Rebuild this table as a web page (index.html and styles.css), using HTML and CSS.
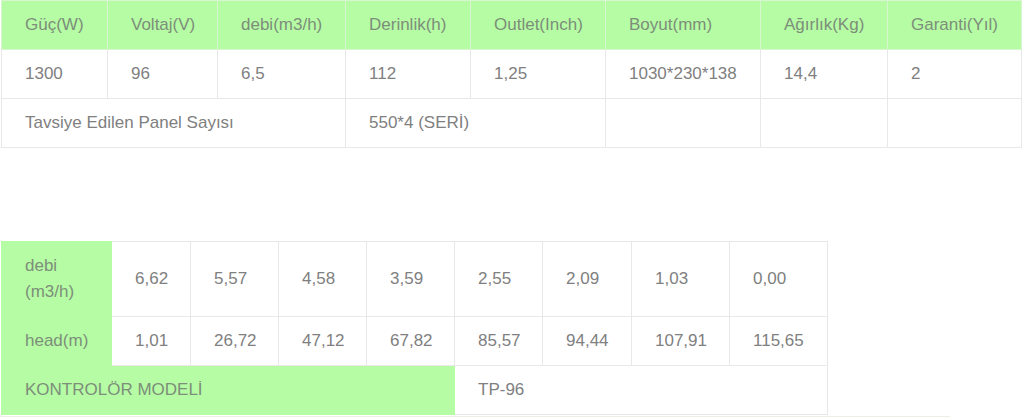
FILE: index.html
```html
<!DOCTYPE html>
<html>
  <head>
    <meta charset="UTF-8" />
    <title>Pompa Teknik Özellikler</title>
    <link rel="stylesheet" href="styles.css">
  </head>
  <body>
    <div class="product-specs">
      <!-- Teknik özellikler -->
      <table class="spec-table">
        <colgroup>
          <col style="width: 106px" />
          <col style="width: 110px" />
          <col style="width: 128px" />
          <col style="width: 125px" />
          <col style="width: 135px" />
          <col style="width: 155px" />
          <col style="width: 127px" />
          <col style="width: 134px" />
        </colgroup>
        <tr class="head-row">
          <td>Güç(W)</td>
          <td>Voltaj(V)</td>
          <td>debi(m3/h)</td>
          <td>Derinlik(h)</td>
          <td>Outlet(Inch)</td>
          <td>Boyut(mm)</td>
          <td>Ağırlık(Kg)</td>
          <td>Garanti(Yıl)</td>
        </tr>
        <tr>
          <td>1300</td>
          <td>96</td>
          <td>6,5</td>
          <td>112</td>
          <td>1,25</td>
          <td>1030*230*138</td>
          <td>14,4</td>
          <td>2</td>
        </tr>
        <tr>
          <td colspan="3">Tavsiye Edilen Panel Sayısı</td>
          <td colspan="2">550*4 (SERİ)</td>
          <td></td>
          <td></td>
          <td></td>
        </tr>
      </table>

      <!-- Performans eğrisi -->
      <table class="curve-table">
        <colgroup>
          <col style="width: 110px" />
          <col style="width: 79px" />
          <col style="width: 88px" />
          <col style="width: 88px" />
          <col style="width: 88px" />
          <col style="width: 88px" />
          <col style="width: 89px" />
          <col style="width: 98px" />
          <col style="width: 98px" />
        </colgroup>
        <tr>
          <td class="label">debi (m3/h)</td>
          <td>6,62</td>
          <td>5,57</td>
          <td>4,58</td>
          <td>3,59</td>
          <td>2,55</td>
          <td>2,09</td>
          <td>1,03</td>
          <td>0,00</td>
        </tr>
        <tr>
          <td class="label">head(m)</td>
          <td>1,01</td>
          <td>26,72</td>
          <td>47,12</td>
          <td>67,82</td>
          <td>85,57</td>
          <td>94,44</td>
          <td>107,91</td>
          <td>115,65</td>
        </tr>
        <tr>
          <td class="label" colspan="5">KONTROLÖR MODELİ</td>
          <td colspan="4">TP-96</td>
        </tr>
      </table>

      <div class="divider"></div>
    </div>
  </body>
</html>
```

FILE: styles.css
```css
* {
  margin: 0;
  padding: 0;
  box-sizing: border-box;
}

body {
  font-family: "Liberation Sans", Arial, sans-serif;
  font-size: 17px;
  color: #808080;
  background: #fff;
}

.product-specs {
  width: 1024px;
  padding-left: 1px;
}

table {
  border-collapse: collapse;
  table-layout: fixed;
}

td {
  border: 1px solid #e8e8e8;
  padding: 11px 23px;
  line-height: 26px;
  vertical-align: middle;
  text-align: left;
}

.spec-table {
  width: 1020px;
}

.head-row td {
  background: #b5fca5;
  border-color: #d8f5cf;
  color: #7d8e79;
}

.curve-table {
  width: 826px;
  margin-top: 93px;
}

.curve-table .label {
  background: #b5fca5;
  border-color: #b5fca5;
  color: #7d8e79;
}

.divider {
  width: 950px;
  height: 1px;
  margin-top: 1px;
  margin-left: -1px;
  background: #eeeee6;
}
```
